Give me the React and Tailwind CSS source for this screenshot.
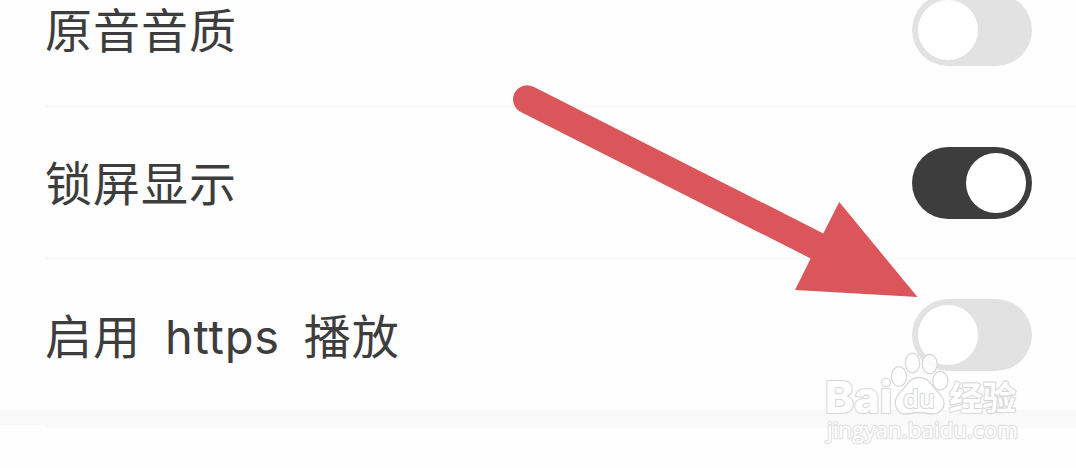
import clsx from 'clsx';

const Toggle = ({ on = false }) => (
  <button
    type="button"
    role="switch"
    aria-checked={on}
    className={clsx(
      'flex h-[72px] w-[120px] shrink-0 items-center rounded-full px-[6px]',
      on ? 'justify-end bg-[#3d3d3d]' : 'justify-start bg-[#e2e2e2]'
    )}
  >
    <span className="size-[60px] rounded-full bg-white" />
  </button>
);

const SettingRow = ({ children, on, className }) => (
  <div className={clsx('flex items-center justify-between pr-11', className)}>
    <div className="flex items-baseline whitespace-pre pb-[5px] text-[47px] leading-none tracking-[1px] text-[#3d3d3d]">
      {children}
    </div>
    <Toggle on={on} />
  </div>
);

const Arrow = () => (
  <svg className="pointer-events-none absolute left-0 top-0" width="1076" height="468" viewBox="0 0 1076 468">
    <path
      d="M533.5 86.7 L823.3 233.4 L839.2 202 L917.5 297 L795 290 L810.7 258.5 L520.8 111.9 A14.1 14.1 0 0 1 533.5 86.7Z"
      fill="#db565a"
    />
  </svg>
);

const Watermark = () => (
  <svg
    className="pointer-events-none absolute left-0 top-0"
    width="1076"
    height="468"
    viewBox="0 0 1076 468"
    fill="#fff"
    stroke="#d8d8d8"
    strokeWidth="1.3"
    strokeLinejoin="round"
  >
    {/* paw */}
    <g fillOpacity="0.85">
      <ellipse cx="899" cy="376.5" rx="7.6" ry="9.8" />
      <ellipse cx="912.5" cy="363" rx="7.2" ry="9.8" />
      <ellipse cx="929.7" cy="364" rx="7.5" ry="9.6" />
      <ellipse cx="940.3" cy="380.7" rx="7.6" ry="9.4" />
      <path d="M919 377.5 C925 377.5 929 380.5 932 385 C935.5 391 944 395 944 403 C944 410 939 414 932 414 C927 414 924 412.5 919 412.5 C914 412.5 910 414 905 414 C899 414 895.3 409 895.3 402.5 C895.3 394 903 391 906.5 385 C909 380.5 913 377.5 919 377.5Z" />
    </g>
    <g strokeWidth="2.2" style={{ paintOrder: 'stroke' }}>
      <text x="825" y="412.5" fontSize="43.5" fontWeight="800" fontFamily="Inter, sans-serif" textLength="67" lengthAdjust="spacingAndGlyphs">
        Bai
      </text>
      <text x="903" y="408" fontSize="26" fontWeight="600" fontFamily="'Open Sans', sans-serif" textLength="32" lengthAdjust="spacingAndGlyphs">
        du
      </text>
      <text x="949" y="409.5" fontSize="33" fontWeight="700" fontFamily="'Noto Sans CJK SC', sans-serif" textLength="67" lengthAdjust="spacingAndGlyphs">
        经验
      </text>
    </g>
    <g stroke="#e2e2e2" strokeWidth="2.4" style={{ paintOrder: 'stroke' }}>
      <text x="827" y="438" fontSize="22.5" fontWeight="500" fontFamily="'Open Sans', sans-serif" textLength="191" lengthAdjust="spacingAndGlyphs">
        jingyan.baidu.com
      </text>
    </g>
  </svg>
);

export default function App() {
  return (
    <div className="relative h-[468px] w-full overflow-hidden bg-[#fefefe] font-['Noto_Sans_CJK_SC',sans-serif]">
      <div className="pl-[45px]">
        <SettingRow className="-mt-[45px] h-[150px]">原音音质</SettingRow>
        <div className="h-[3px] bg-[#fafafa]" />
        <SettingRow className="h-[149px]" on>
          锁屏显示
        </SettingRow>
        <div className="h-[3px] bg-[#fafafa]" />
        <SettingRow className="h-[150px]">
          <span className="pt-[4px]">启用</span>
          <span className="ml-[24px] mr-[24px] font-['Inter',sans-serif] tracking-[0.75px]">https</span>
          <span>播放</span>
        </SettingRow>
      </div>
      <div className="h-[15px] bg-[#f9f9f9]" />
      <div className="ml-[45px] h-[3px] bg-[#fafafa]" />
      <Arrow />
      <Watermark />
    </div>
  );
}
